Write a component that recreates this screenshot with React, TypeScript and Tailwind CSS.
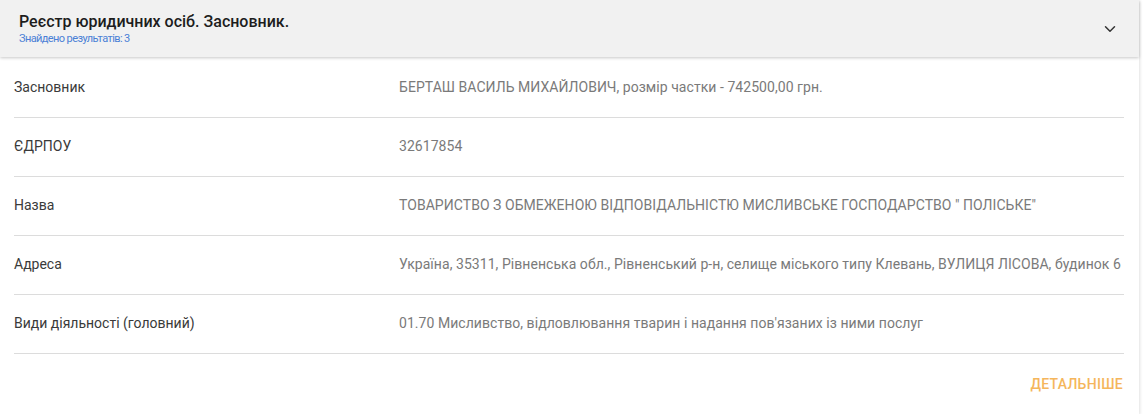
import { ChevronDown } from "lucide-react";

const rows = [
  ["Засновник", "БЕРТАШ ВАСИЛЬ МИХАЙЛОВИЧ, розмір частки - 742500,00 грн."],
  ["ЄДРПОУ", "32617854"],
  ["Назва", "ТОВАРИСТВО З ОБМЕЖЕНОЮ ВІДПОВІДАЛЬНІСТЮ МИСЛИВСЬКЕ ГОСПОДАРСТВО \" ПОЛІСЬКЕ\""],
  ["Адреса", "Україна, 35311, Рівненська обл., Рівненський р-н, селище міського типу Клевань, ВУЛИЦЯ ЛІСОВА, будинок 6"],
  ["Види діяльності (головний)", "01.70 Мисливство, відловлювання тварин і надання пов'язаних із ними послуг"],
];

export default function App() {
  return (
    <div className="h-[414px] w-[1144px] bg-white font-['Roboto',sans-serif]">
      <div className="w-[1139px] bg-white shadow-[1px_1px_3px_rgba(0,0,0,0.12)]">
        {/* Header */}
        <div className="flex h-[57px] items-center justify-between bg-[#f1f1f1] pl-[19px] pr-[20px] shadow-[0_1px_3px_rgba(0,0,0,0.22)]">
          <div className="flex flex-col">
            <span className="text-[16px] font-medium leading-[20px] text-[#1d1d1d]">
              Реєстр юридичних осіб. Засновник.
            </span>
            <span className="text-[11px] leading-[14px] tracking-[-0.6px] text-[#4a7fd6]">
              Знайдено результатів: 3
            </span>
          </div>
          <ChevronDown className="h-[18px] w-[18px] text-[#333]" strokeWidth={2} />
        </div>

        {/* Rows */}
        <div className="pl-[14px] pr-[15px] pt-[2px]">
          {rows.map(([label, value]) => (
            <div
              key={label}
              className="flex h-[59px] items-center border-b border-[#dcdcdc] pb-[2px] text-[14px]"
            >
              <span className="w-[385px] text-[#3a3a3a]">{label}</span>
              <span className="tracking-[0.05px] text-[#7a7a7a]">{value}</span>
            </div>
          ))}
          <div className="flex h-[60px] items-center justify-end pr-[1px]">
            <span className="text-[14px] font-medium uppercase tracking-[0.3px] text-[#f5b65c]">Детальніше</span>
          </div>
        </div>
      </div>
    </div>
  );
}
